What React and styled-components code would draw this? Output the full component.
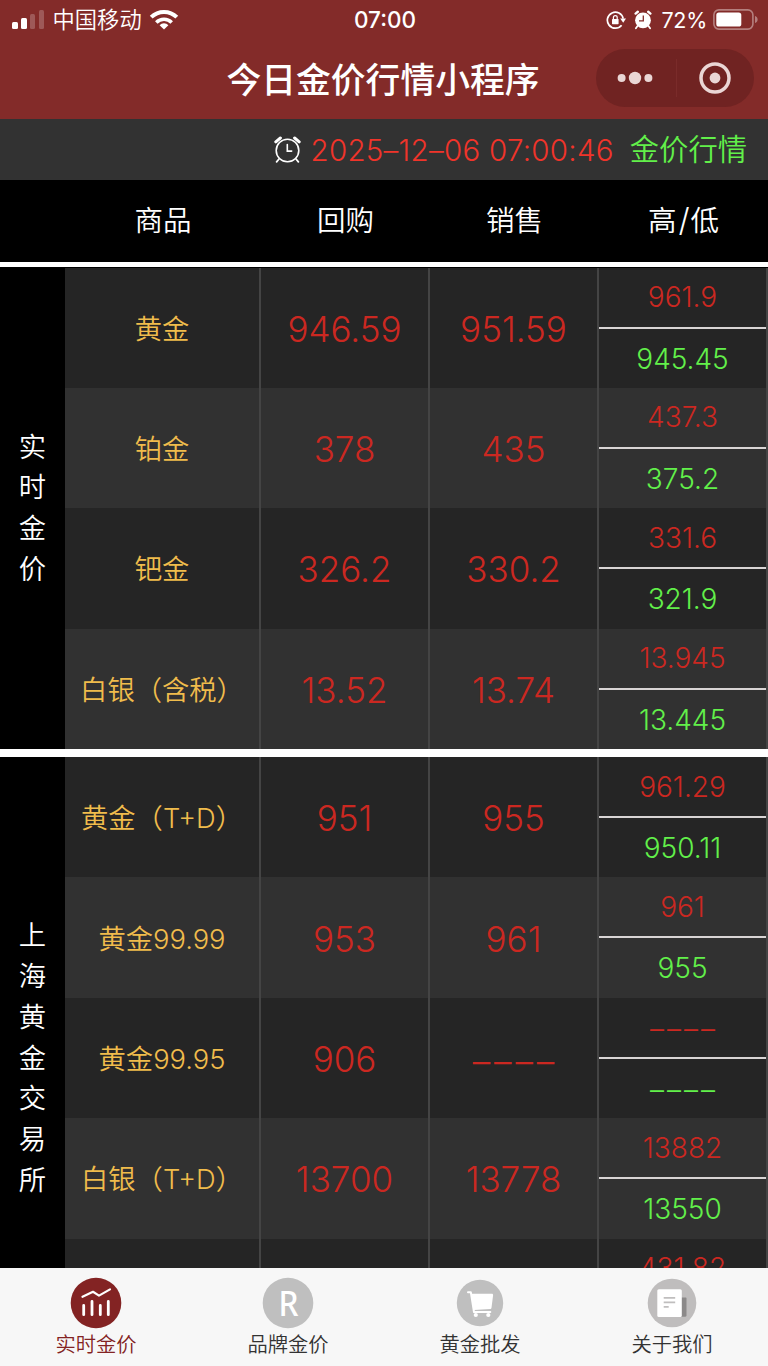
import React from 'react';
import styled, { createGlobalStyle } from 'styled-components';

const GROUPS = [
  {
    title: '实时金价',
    rows: [
      { name: '黄金', buy: '946.59', sell: '951.59', high: '961.9', low: '945.45' },
      { name: '铂金', buy: '378', sell: '435', high: '437.3', low: '375.2' },
      { name: '钯金', buy: '326.2', sell: '330.2', high: '331.6', low: '321.9' },
      { name: '白银（含税）', buy: '13.52', sell: '13.74', high: '13.945', low: '13.445' },
    ],
  },
  {
    title: '上海黄金交易所',
    rows: [
      { name: '黄金（T+D）', buy: '951', sell: '955', high: '961.29', low: '950.11' },
      { name: '黄金99.99', buy: '953', sell: '961', high: '961', low: '955' },
      { name: '黄金99.95', buy: '906', sell: '', high: '', low: '' },
      { name: '白银（T+D）', buy: '13700', sell: '13778', high: '13882', low: '13550' },
      { name: ' ', buy: ' ', sell: ' ', high: '431.82', low: ' ' },
    ],
  },
];

const TABS = [
  { label: '实时金价', icon: ChartIcon, active: true },
  { label: '品牌金价', icon: BrandIcon },
  { label: '黄金批发', icon: CartIcon },
  { label: '关于我们', icon: AboutIcon },
];

// no quote yet
const value = (text) => text || <Dashes>––––</Dashes>;

function App() {
  return (
    <>
      <GlobalStyle />
      <Screen>
        <Header>
          <StatusBar>
            <StatusSide>
              <SignalIcon />
              <Carrier>中国移动</Carrier>
              <WifiIcon />
            </StatusSide>
            <Clock>07:00</Clock>
            <StatusSide $right>
              <LockIcon />
              <AlarmSolidIcon />
              <Percent>72%</Percent>
              <BatteryIcon />
            </StatusSide>
          </StatusBar>
          <NavBar>
            <span />
            <Title>今日金价行情小程序</Title>
            <Capsule>
              <MoreIcon />
              <Divider />
              <CloseIcon />
            </Capsule>
          </NavBar>
        </Header>
        <TimeBar>
          <AlarmIcon />
          <Time>2025–12–06 07:00:46</Time>
          <Link>金价行情</Link>
        </TimeBar>
        <TableHead>
          <span />
          <span>商品</span>
          <span>回购</span>
          <span>销售</span>
          <span>高<Slash>/</Slash>低</span>
        </TableHead>
        <Table>
          {GROUPS.map((group) => (
            <Group key={group.title}>
              <Side>
                {[...group.title].map((char, i) => <span key={i}>{char}</span>)}
              </Side>
              <Rows>
                {group.rows.map((row, i) => (
                  <Row key={i}>
                    <Name>{row.name}</Name>
                    <Price>{value(row.buy)}</Price>
                    <Price>{value(row.sell)}</Price>
                    <Range>
                      <High>{value(row.high)}</High>
                      <Low>{value(row.low)}</Low>
                    </Range>
                  </Row>
                ))}
              </Rows>
            </Group>
          ))}
        </Table>
        <TabBar>
          {TABS.map(({ label, icon: Icon, active }) => (
            <Tab key={label} $active={active}>
              <Icon />
              <span>{label}</span>
            </Tab>
          ))}
        </TabBar>
      </Screen>
    </>
  );
}

export default App;

function SignalIcon() {
  return (
    <svg width="33" height="20" viewBox="0 0 33 20" fill="#fff">
      <rect x="0" y="12" width="6" height="7" rx="1.5" />
      <rect x="9" y="8" width="6" height="11" rx="1.5" />
      <rect x="18" y="4" width="5" height="15" rx="1.5" opacity=".22" />
      <rect x="27" y="0" width="5" height="19" rx="1.5" opacity=".22" />
    </svg>
  );
}

function WifiIcon() {
  return (
    <svg width="30" height="21" viewBox="0 0 30 21" fill="none" stroke="#fff" strokeWidth="4">
      <path d="M2.2 8.2a18.2 18.2 0 0 1 25.6 0" />
      <path d="M7.3 13.4a10.9 10.9 0 0 1 15.4 0" strokeWidth="3.6" />
      <path d="M15 20.6l-4.4-4.4a6.2 6.2 0 0 1 8.8 0z" fill="#fff" stroke="none" />
    </svg>
  );
}

function LockIcon() {
  return (
    <svg width="20" height="20" viewBox="0 0 20 20" fill="none" stroke="#fff" strokeWidth="1.7">
      <path d="M15.6 15.2a8 8 0 1 1 1.6-6.6" />
      <path d="M14.2 8.6h5.8l-2.8 4.2z" fill="#fff" stroke="none" />
      <rect x="6" y="9" width="6.6" height="5.2" rx=".6" fill="#fff" stroke="none" />
      <path d="M7.4 9V7.5a1.9 1.9 0 0 1 3.8 0V9" strokeWidth="1.2" />
    </svg>
  );
}

function AlarmSolidIcon() {
  return (
    <svg width="18" height="20" viewBox="0 0 18 20">
      <circle cx="9" cy="10.3" r="7.9" fill="#fff" />
      <path d="M1.6 3.6l2.2-1.8M16.4 3.6l-2.200-1.800" stroke="#fff" strokeWidth="2.4" strokeLinecap="round" />
      <path d="M3.5 16l-1.600 2.200M14.500 16l1.600 2.200" stroke="#fff" strokeWidth="1.8" strokeLinecap="round" />
      <path d="M9.3 5.6v5.200H5" fill="none" stroke="#832b29" strokeWidth="1.3" />
    </svg>
  );
}

function BatteryIcon() {
  return (
    <svg width="45" height="21" viewBox="0 0 45 21">
      <rect x=".9" y=".9" width="39" height="19.2" rx="5" fill="none" stroke="#fff" strokeOpacity=".4" strokeWidth="1.6" />
      <rect x="3.3" y="3.4" width="25" height="14.2" rx="2.6" fill="#fff" />
      <path d="M42 7c1.6.4 2.6 1.8 2.6 3.500S43.600 13.600 42 14z" fill="#fff" opacity=".4" />
    </svg>
  );
}

function MoreIcon() {
  return (
    <svg width="36" height="14" viewBox="0 0 36 14" fill="#ead6d5">
      <circle cx="4.600" cy="7" r="4" />
      <circle cx="18" cy="7" r="6.200" />
      <circle cx="31.400" cy="7" r="4" />
    </svg>
  );
}

function CloseIcon() {
  return (
    <svg width="32" height="32" viewBox="0 0 32 32">
      <circle cx="16" cy="16" r="14" fill="none" stroke="#ead6d5" strokeWidth="3.500" />
      <circle cx="16" cy="16" r="5.400" fill="#ead6d5" />
    </svg>
  );
}

function AlarmIcon() {
  return (
    <svg width="27" height="28" viewBox="0 0 27 28" fill="none" stroke="#fff" strokeLinecap="round">
      <circle cx="13.500" cy="14.500" r="11.300" strokeWidth="1.600" />
      <path d="M1.800 5.800l4.600-3.800M25.200 5.800l-4.600-3.800" strokeWidth="3" />
      <path d="M5 23l-2.400 2.800M22 23l2.400 2.800" strokeWidth="1.800" />
      <path d="M13.300 8.500v6.600h4.400" strokeWidth="1.600" />
    </svg>
  );
}

function ChartIcon() {
  return (
    <svg width="52" height="52" viewBox="0 0 52 52">
      <circle cx="26" cy="26" r="25.300" fill="#832323" />
      <g fill="none" stroke="#fff" strokeLinecap="round" strokeLinejoin="round">
        <path d="M12.500 19.800L23 14.800l6 3.800 11-6.200" strokeWidth="2.200" />
        <path d="M13.700 28.500v9.200M22 24.500v13.200M30.300 28.500v9.200M38.300 24.500v13.200" strokeWidth="2.800" />
      </g>
    </svg>
  );
}

function BrandIcon() {
  return (
    <svg width="52" height="52" viewBox="0 0 52 52">
      <circle cx="26" cy="26" r="25.300" fill="#bfbfbf" />
      <text x="26.500" y="38.500" textAnchor="middle" fill="#fff" fontFamily="'Noto Sans', sans-serif" fontSize="35" fontWeight="500" textLength="20" lengthAdjust="spacingAndGlyphs">R</text>
    </svg>
  );
}

function CartIcon() {
  return (
    <svg width="52" height="52" viewBox="0 0 52 52">
      <circle cx="26" cy="26" r="23.200" fill="#bfbfbf" />
      <path d="M14 15.200h2.800L20 35h16.300" fill="none" stroke="#fff" strokeWidth="2" strokeLinecap="round" strokeLinejoin="round" />
      <path d="M17 16.800h20.800c.9 0 1.400.600 1.300 1.400l-1.600 12.600c-.1.800-.7 1.200-1.400 1.200L20 33z" fill="#fff" />
      <circle cx="21.800" cy="38" r="2.100" fill="#fff" />
      <circle cx="34.300" cy="38" r="2.100" fill="#fff" />
    </svg>
  );
}

function AboutIcon() {
  return (
    <svg width="52" height="52" viewBox="0 0 52 52">
      <circle cx="26" cy="26" r="24.300" fill="#bfbdbd" />
      <path d="M35 20.500h4.500c.6 0 1 .4 1 1v17c0 .7-.5 1.200-1.200 1.200H35z" fill="#8b8989" />
      <rect x="11.300" y="12.300" width="24.500" height="27.600" rx="1.500" fill="#fff" />
      <path d="M17.700 20.800h11.500M17.700 25.300h11.500M17.700 29.800h5" stroke="#c0bebe" strokeWidth="1.800" />
    </svg>
  );
}

const GlobalStyle = createGlobalStyle`
  * {
    box-sizing: border-box;
  }

  body {
    margin: 0;
    background: #fff;
    font-family: Inter, 'Noto Sans CJK SC', sans-serif;
    font-weight: 350;
  }

  svg {
    display: block;
    flex: none;
  }
`;

const Screen = styled.div`
  display: flex;
  flex-direction: column;
  width: 768px;
  height: 1366px;
  overflow: hidden;
  white-space: nowrap;
`;

const Header = styled.header`
  height: 119px;
  flex: none;
  background: #832b29;
  color: #fff;
`;

const StatusBar = styled.div`
  display: grid;
  grid-template-columns: 1fr auto 1fr;
  align-items: center;
  height: 39px;
  padding: 0 10px 0 12px;
`;

const StatusSide = styled.div`
  display: flex;
  align-items: center;
  justify-content: ${({ $right }) => $right ? 'flex-end' : 'flex-start'};
  gap: ${({ $right }) => $right ? '8px' : '7.500px'};
`;

const Carrier = styled.span`
  font-size: 22.300px;
  line-height: 30px;
`;

const Clock = styled.span`
  font-size: 22.500px;
  font-weight: 500;
`;

const Percent = styled.span`
  margin: 0 -2px 0 2px;
  font-size: 21.500px;
  font-weight: 400;
  letter-spacing: -0.300px;
`;

const NavBar = styled.div`
  display: grid;
  grid-template-columns: 1fr auto 1fr;
  align-items: center;
  height: 78px;
  padding: 0 14px 0 12px;
`;

const Title = styled.h1`
  margin: 0;
  padding-top: 3px;
  font-size: 34.800px;
  line-height: 50px;
  font-weight: 500;
`;

const Capsule = styled.div`
  display: flex;
  align-items: center;
  justify-content: space-between;
  justify-self: end;
  width: 158px;
  height: 58px;
  padding: 0 23px 0 21px;
  border-radius: 29px;
  background: #702322;
`;

const Divider = styled.i`
  width: 1px;
  height: 38px;
  background: #7a2b2a;
`;

const TimeBar = styled.div`
  display: flex;
  align-items: center;
  justify-content: flex-end;
  height: 61px;
  flex: none;
  padding-right: 21px;
  background: #323232;
`;

const Time = styled.span`
  margin: 0 16px 0 10px;
  color: #f0342a;
  font-size: 29.500px;
  font-weight: 300;
  letter-spacing: 0.280px;
`;

const Link = styled.span`
  color: #62f04a;
  font-size: 29.300px;
  line-height: 40px;
`;

const columns = '196px 169px 169px 169px';

const TableHead = styled.div`
  display: grid;
  grid-template-columns: 65px ${columns};
  align-items: center;
  height: 82px;
  flex: none;
  padding-bottom: 1px;
  background: #000;
  color: #fff;
  font-size: 28.500px;
  line-height: 40px;
  text-align: center;
`;

const Slash = styled.span`
  margin: 0 1px 0 2px;
  font-size: 32px;
  line-height: 1;
`;

const Table = styled.main`
  flex: 1;
  min-height: 0;
  overflow: hidden;
`;

const Group = styled.section`
  display: flex;
  padding-top: 0.500px;
  border-top: 5px solid #fff;
  background: #000;

  & + & {
    padding-top: 0;
    border-top-width: 8px;
  }
`;

const Side = styled.div`
  display: flex;
  flex-direction: column;
  align-items: center;
  justify-content: center;
  width: 65px;
  padding-top: 2px;
  color: #fff;
  font-size: 27.300px;
  line-height: 40.800px;
`;

const Rows = styled.div`
  flex: 1;
`;

const Row = styled.div`
  display: grid;
  grid-template-columns: ${columns};
  height: 120.400px;
  background: #252525;

  &:nth-child(even) {
    background: #313131;
  }
`;

const Cell = styled.div`
  display: flex;
  align-items: center;
  justify-content: center;
  border-right: 2px solid #444;
`;

const Name = styled(Cell)`
  padding-bottom: 2px;
  color: #f0bc4c;
  font-size: 27.300px;
`;

const Price = styled(Cell)`
  padding-top: 2px;
  color: #cb2821;
  font-size: 35px;
  font-weight: 300;
`;

const Range = styled.div`
  display: flex;
  flex-direction: column;
  border-right: 2px solid #444;
`;

const High = styled.div`
  display: flex;
  align-items: center;
  justify-content: center;
  height: 61px;
  border-bottom: 2px solid #d8d4d4;
  color: #cb2821;
  font-size: 28px;
  font-weight: 300;
`;

const Low = styled(High)`
  height: 59px;
  padding-top: 1px;
  border: 0;
  color: #62f04a;
`;

const Dashes = styled.span`
  margin-right: -0.110em;
  padding-top: 3px;
  letter-spacing: 0.110em;
`;

const TabBar = styled.nav`
  display: grid;
  grid-template-columns: repeat(4, 1fr);
  height: 98px;
  flex: none;
  background: #f7f7f7;
`;

const Tab = styled.div`
  display: flex;
  flex-direction: column;
  align-items: center;
  padding-top: 9px;
  color: ${({ $active }) => $active ? '#832323' : '#333'};
  font-size: 20.300px;
  line-height: 32px;
`;
